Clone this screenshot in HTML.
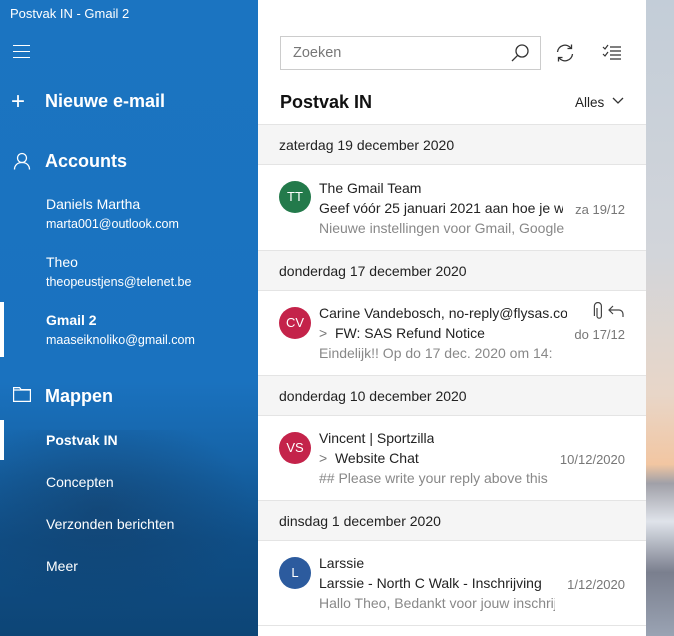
<!DOCTYPE html>
<html><head><meta charset="utf-8"><style>
*{margin:0;padding:0;box-sizing:border-box}
html,body{width:674px;height:636px;overflow:hidden}
body{position:relative;font-family:"Liberation Sans",sans-serif;background:#fff}
#side{position:absolute;left:0;top:0;width:258px;height:636px;background:linear-gradient(180deg,#1b74c1 0%,#1a72bf 60%,#1664a8 72%,#0f4e86 85%,#0d4576 100%);color:#fff;overflow:hidden}
.mt{position:absolute;left:-20px;top:430px;width:300px;height:200px;background:radial-gradient(ellipse at 40% 40%,rgba(20,60,100,.55),rgba(20,60,100,0) 60%)}
.t{position:absolute;white-space:nowrap}
#mid{position:absolute;left:258px;top:0;width:388px;height:636px;background:#fff;overflow:hidden}
#bg{position:absolute;left:646px;top:0;width:28px;height:636px;background:linear-gradient(180deg,#c3cdd8 0%,#d2d5da 40%,#e8d6c8 62%,#f2c6a2 73%,#a0a0a8 76%,#dfe3ea 82%,#7a7f8e 90%,#9aa3b3 100%)}
.hd{position:absolute;left:0;width:388px;height:41px;background:#f5f5f5;border-top:1px solid #e4e4e4;border-bottom:1px solid #e4e4e4;font-size:14px;color:#222;padding:12px 0 0 21px}
.av{position:absolute;left:21px;width:32px;height:32px;border-radius:50%;color:#fff;font-size:13px;text-align:center;line-height:32px}
.s{position:absolute;left:61px;font-size:14px;color:#222;white-space:nowrap;overflow:hidden}
.p{color:#888}
.d{position:absolute;right:21px;font-size:13px;color:#777}
</style></head><body>
<div id="side"><div class="mt"></div>
<div class="t" style="left:10px;top:6px;font-size:13px">Postvak IN - Gmail 2</div>
<div style="position:absolute;left:13px;top:45px;width:17px;height:1px;background:#fff;box-shadow:0 6px 0 #fff,0 12px 0 #fff"></div>
<div class="t" style="left:11px;top:88px;font-size:24px;font-weight:300">+</div>
<div class="t" style="left:45px;top:91px;font-size:18px;font-weight:bold">Nieuwe e-mail</div>
<svg style="position:absolute;left:13px;top:152px" width="18" height="18" viewBox="0 0 18 18" fill="none" stroke="#fff" stroke-width="1.3"><circle cx="9" cy="6" r="4.5"/><path d="M1.5 17.5c0-4.5 3.3-7 7.5-7s7.5 2.5 7.5 7"/></svg>
<div class="t" style="left:45px;top:151px;font-size:18px;font-weight:bold">Accounts</div>
<div class="t" style="left:46px;top:196px;font-size:14px">Daniels Martha</div>
<div class="t" style="left:46px;top:217px;font-size:12.5px">marta001@outlook.com</div>
<div class="t" style="left:46px;top:254px;font-size:14px">Theo</div>
<div class="t" style="left:46px;top:275px;font-size:12.5px">theopeustjens@telenet.be</div>
<div style="position:absolute;left:0;top:302px;width:4px;height:55px;background:#fff"></div>
<div class="t" style="left:46px;top:312px;font-size:14px;font-weight:bold">Gmail 2</div>
<div class="t" style="left:46px;top:333px;font-size:12.5px">maaseiknoliko@gmail.com</div>
<svg style="position:absolute;left:13px;top:387px" width="18" height="15" viewBox="0 0 18 15" fill="none" stroke="#fff" stroke-width="1.2"><path d="M.6 .6h6l1.5 2h9.3v11.8H.6z"/><path d="M.6 3h16.8"/></svg>
<div class="t" style="left:45px;top:386px;font-size:18px;font-weight:bold">Mappen</div>
<div style="position:absolute;left:0;top:420px;width:4px;height:40px;background:#fff"></div>
<div class="t" style="left:46px;top:432px;font-size:14px;font-weight:bold">Postvak IN</div>
<div class="t" style="left:46px;top:474px;font-size:14px">Concepten</div>
<div class="t" style="left:46px;top:516px;font-size:14px">Verzonden berichten</div>
<div class="t" style="left:46px;top:558px;font-size:14px">Meer</div>
</div>
<div id="mid">
<div style="position:absolute;left:22px;top:36px;width:261px;height:34px;border:1px solid #ccc;font-size:14.5px;color:#777;padding:8px 0 0 12px">Zoeken</div>
<svg style="position:absolute;left:252px;top:43px" width="20" height="20" viewBox="0 0 20 20" fill="none" stroke="#333" stroke-width="1.3"><circle cx="12" cy="8" r="6"/><path d="M7.7 12.3L2 18"/></svg>
<svg style="position:absolute;left:297px;top:43px" width="20" height="20" viewBox="0 0 20 20" fill="none" stroke="#333" stroke-width="1.3"><path d="M2.5 9A7.5 7.5 0 0 1 16 5.2M17.5 11A7.5 7.5 0 0 1 4 14.8"/><path d="M16.5 1.5v4h-4M3.5 18.5v-4h4"/></svg>
<svg style="position:absolute;left:344px;top:44px" width="20" height="18" viewBox="0 0 20 18" fill="none" stroke="#333" stroke-width="1.2"><path d="M1 3l2 2 3-4M1 10l2 2 3-4M8 3h11M8 7h11M8 11h11M8 15h11"/></svg>
<div class="t" style="left:22px;top:92px;font-size:18px;font-weight:bold;color:#111">Postvak IN</div>
<div class="t" style="left:317px;top:95px;font-size:13.5px;color:#222">Alles</div>
<svg style="position:absolute;left:354px;top:97px" width="12" height="8" viewBox="0 0 12 8" fill="none" stroke="#333" stroke-width="1.3"><path d="M1 1l5 5 5-5"/></svg>

<div class="hd" style="top:124px">zaterdag 19 december 2020</div>
<div class="av" style="top:181px;background:#237a4b">TT</div>
<div class="s" style="top:180px">The Gmail Team</div>
<div class="s" style="top:200px;width:244px">Geef vóór 25 januari 2021 aan hoe je wilt</div>
<div class="d" style="top:202px">za 19/12</div>
<div class="s p" style="top:220px;width:249px">Nieuwe instellingen voor Gmail, Google</div>

<div class="hd" style="top:250px">donderdag 17 december 2020</div>
<div class="av" style="top:307px;background:#c4234a">CV</div>
<div class="s" style="top:305px;width:248px">Carine Vandebosch, no-reply@flysas.com</div>
<svg style="position:absolute;left:332px;top:302px" width="36" height="20" viewBox="0 0 36 20" fill="none" stroke="#444" stroke-width="1.2"><path d="M7 6v8a2.2 2.2 0 0 0 4.4 0V4a3.5 3.5 0 0 0-7 0v10"/><path d="M23 4l-4 4 4 4M19 8h10a4 4 0 0 1 4 4v3"/></svg>
<div class="s" style="top:325px"><span style="color:#777">&gt;</span>&nbsp; FW: SAS Refund Notice</div>
<div class="d" style="top:327px">do 17/12</div>
<div class="s p" style="top:345px;width:249px">Eindelijk!! Op do 17 dec. 2020 om 14:</div>

<div class="hd" style="top:375px">donderdag 10 december 2020</div>
<div class="av" style="top:432px;background:#c4234a">VS</div>
<div class="s" style="top:430px">Vincent | Sportzilla</div>
<div class="s" style="top:450px"><span style="color:#777">&gt;</span>&nbsp; Website Chat</div>
<div class="d" style="top:452px">10/12/2020</div>
<div class="s p" style="top:470px;width:232px">## Please write your reply above this</div>

<div class="hd" style="top:500px">dinsdag 1 december 2020</div>
<div class="av" style="top:557px;background:#2c5b9e">L</div>
<div class="s" style="top:555px">Larssie</div>
<div class="s" style="top:575px;width:238px">Larssie - North C Walk - Inschrijving</div>
<div class="d" style="top:577px">1/12/2020</div>
<div class="s p" style="top:595px;width:236px">Hallo Theo, Bedankt voor jouw inschrijving</div>
<div style="position:absolute;left:0;top:625px;width:388px;height:1px;background:#e4e4e4"></div>
</div>
<div id="bg"></div>
</body></html>
